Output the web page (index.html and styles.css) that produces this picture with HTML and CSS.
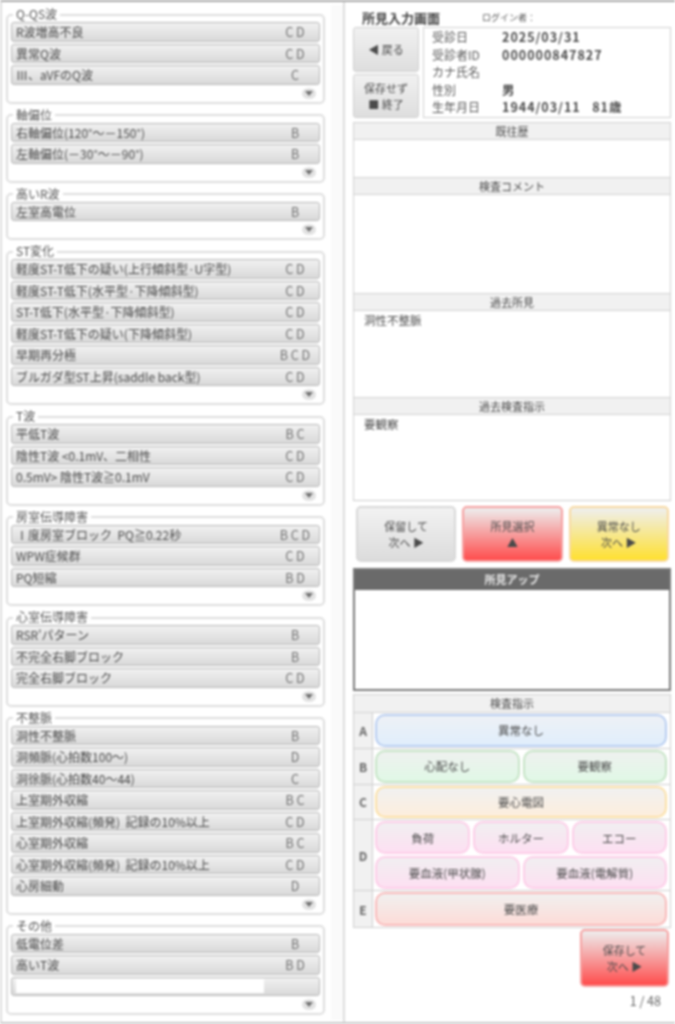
FILE: index.html
```html
<!DOCTYPE html>
<html lang="ja">

<head>
    <meta charset="UTF-8">
    <meta name="viewport" content="width=device-width, initial-scale=1.0">
    <title>所見入力画面</title>
    <link rel="stylesheet" href="styles.css">
</head>

<body>
    <div class="screen">
        <div class="left">
            <div class="groups">
                <fieldset class="group">
                    <legend>Q-QS波</legend>
                    <div class="row"><span>R波増高不良</span><span class="code">C D</span></div>
                    <div class="row"><span>異常Q波</span><span class="code">C D</span></div>
                    <div class="row"><span>Ⅲ、aVFのQ波</span><span class="code">C</span></div>
                    <div class="more"><span class="arrow"></span></div>
                </fieldset>
                <fieldset class="group">
                    <legend>軸偏位</legend>
                    <div class="row"><span>右軸偏位(120°～－150°)</span><span class="code">B</span></div>
                    <div class="row"><span>左軸偏位(－30°～－90°)</span><span class="code">B</span></div>
                    <div class="more"><span class="arrow"></span></div>
                </fieldset>
                <fieldset class="group">
                    <legend>高いR波</legend>
                    <div class="row"><span>左室高電位</span><span class="code">B</span></div>
                    <div class="more"><span class="arrow"></span></div>
                </fieldset>
                <fieldset class="group">
                    <legend>ST変化</legend>
                    <div class="row"><span>軽度ST-T低下の疑い(上行傾斜型·U字型)</span><span class="code">C D</span></div>
                    <div class="row"><span>軽度ST-T低下(水平型·下降傾斜型)</span><span class="code">C D</span></div>
                    <div class="row"><span>ST-T低下(水平型·下降傾斜型)</span><span class="code">C D</span></div>
                    <div class="row"><span>軽度ST-T低下の疑い(下降傾斜型)</span><span class="code">C D</span></div>
                    <div class="row"><span>早期再分極</span><span class="code">B C D</span></div>
                    <div class="row"><span>ブルガダ型ST上昇(saddle back型)</span><span class="code">C D</span></div>
                    <div class="more"><span class="arrow"></span></div>
                </fieldset>
                <fieldset class="group">
                    <legend>T波</legend>
                    <div class="row"><span>平低T波</span><span class="code">B C</span></div>
                    <div class="row"><span>陰性T波 &lt;0.1mV、二相性</span><span class="code">C D</span></div>
                    <div class="row"><span>0.5mV&gt; 陰性T波≧0.1mV</span><span class="code">C D</span></div>
                    <div class="more"><span class="arrow"></span></div>
                </fieldset>
                <fieldset class="group">
                    <legend>房室伝導障害</legend>
                    <div class="row"><span>Ⅰ度房室ブロック&nbsp; PQ≧0.22秒</span><span class="code">B C D</span></div>
                    <div class="row"><span>WPW症候群</span><span class="code">C D</span></div>
                    <div class="row"><span>PQ短縮</span><span class="code">B D</span></div>
                    <div class="more"><span class="arrow"></span></div>
                </fieldset>
                <fieldset class="group">
                    <legend>心室伝導障害</legend>
                    <div class="row"><span>RSR'パターン</span><span class="code">B</span></div>
                    <div class="row"><span>不完全右脚ブロック</span><span class="code">B</span></div>
                    <div class="row"><span>完全右脚ブロック</span><span class="code">C D</span></div>
                    <div class="more"><span class="arrow"></span></div>
                </fieldset>
                <fieldset class="group">
                    <legend>不整脈</legend>
                    <div class="row"><span>洞性不整脈</span><span class="code">B</span></div>
                    <div class="row"><span>洞頻脈(心拍数100～)</span><span class="code">D</span></div>
                    <div class="row"><span>洞徐脈(心拍数40～44)</span><span class="code">C</span></div>
                    <div class="row"><span>上室期外収縮</span><span class="code">B C</span></div>
                    <div class="row"><span>上室期外収縮(頻発)&nbsp; 記録の10%以上</span><span class="code">C D</span></div>
                    <div class="row"><span>心室期外収縮</span><span class="code">B C</span></div>
                    <div class="row"><span>心室期外収縮(頻発)&nbsp; 記録の10%以上</span><span class="code">C D</span></div>
                    <div class="row"><span>心房細動</span><span class="code">D</span></div>
                    <div class="more"><span class="arrow"></span></div>
                </fieldset>
                <fieldset class="group">
                    <legend>その他</legend>
                    <div class="row"><span>低電位差</span><span class="code">B</span></div>
                    <div class="row"><span>高いT波</span><span class="code">B D</span></div>
                    <div class="row row-input"><input class="free" type="text"></div>
                    <div class="more"><span class="arrow"></span></div>
                </fieldset>
            </div>
            <div class="scrollbar"></div>
        </div>

        <div class="right">
            <div class="head">
                <span class="title">所見入力画面</span>
                <span class="login">ログイン者：</span>
            </div>
            <div class="top">
                <div class="nav">
                    <button class="nav-btn">◀ 戻る</button>
                    <button class="nav-btn">保存せず<br>■ 終了</button>
                </div>
                <div class="info">
                    <div class="info-row"><span class="info-label">受診日</span><span class="info-value">2025/03/31</span></div>
                    <div class="info-row"><span class="info-label">受診者ID</span><span class="info-value">000000847827</span></div>
                    <div class="info-row"><span class="info-label">カナ氏名</span><span class="info-value"></span></div>
                    <div class="info-row"><span class="info-label">性別</span><span class="info-value">男</span></div>
                    <div class="info-row"><span class="info-label">生年月日</span><span class="info-value">1944/03/11&nbsp;&nbsp; 81歳</span></div>
                </div>
            </div>

            <div class="sections">
                <div class="sec-head">既往歴</div>
                <div class="sec-body h-history"></div>
                <div class="sec-head">検査コメント</div>
                <div class="sec-body h-comment"></div>
                <div class="sec-head">過去所見</div>
                <div class="sec-body h-past">洞性不整脈</div>
                <div class="sec-head">過去検査指示</div>
                <div class="sec-body h-order">要観察</div>
            </div>

            <div class="actions">
                <button class="action grey">保留して<br>次へ ▶</button>
                <button class="action red">所見選択<br>▲</button>
                <button class="action yellow">異常なし<br>次へ ▶</button>
            </div>

            <div class="findings">
                <div class="findings-head">所見アップ</div>
                <div class="findings-body"></div>
            </div>

            <div class="orders">
                <div class="sec-head orders-head">検査指示</div>
                <div class="order-row">
                    <div class="letter">A</div>
                    <div class="choices"><button class="choice blue">異常なし</button></div>
                </div>
                <div class="order-row">
                    <div class="letter">B</div>
                    <div class="choices"><button class="choice green">心配なし</button><button class="choice green">要観察</button></div>
                </div>
                <div class="order-row">
                    <div class="letter">C</div>
                    <div class="choices"><button class="choice orange">要心電図</button></div>
                </div>
                <div class="order-row order-row-d">
                    <div class="letter">D</div>
                    <div class="choices-stack">
                        <div class="choices"><button class="choice pink">負荷</button><button class="choice pink">ホルター</button><button class="choice pink">エコー</button></div>
                        <div class="choices"><button class="choice pink">要血液(甲状腺)</button><button class="choice pink">要血液(電解質)</button></div>
                    </div>
                </div>
                <div class="order-row">
                    <div class="letter">E</div>
                    <div class="choices"><button class="choice salmon">要医療</button></div>
                </div>
            </div>

            <div class="save-line">
                <button class="action red save">保存して<br>次へ ▶</button>
            </div>
            <div class="pager">1 / 48</div>
        </div>
    </div>
</body>

</html>
```

FILE: styles.css
```css
* {
    box-sizing: border-box;
}

html,
body {
    margin: 0;
    height: 100%;
    background-color: #fff;
}

body {
    overflow: hidden;
    font-family: "Noto Sans CJK JP", "Noto Sans", sans-serif;
    font-size: 12px;
    color: #4a4a4a;
}

button {
    font-family: inherit;
    color: #4a4a4a;
    padding: 0;
    cursor: pointer;
}

.screen {
    display: flex;
    width: 675px;
    height: 1024px;
    border-top: 2px solid #a8a8a8;
    border-bottom: 2px solid #c8c8c8;
    border-left: 2px solid #ddd;
    filter: blur(0.8px);
}

/* left column */
.left {
    display: flex;
    width: 343px;
    border-right: 2px solid #ddd;
}

.groups {
    width: 329px;
    padding: 5px 0 0 4px;
}

.group {
    width: 319px;
    margin: 0 0 4px;
    padding: 0 3px;
    border: 2px solid #dedede;
    border-radius: 5px;
}

.group legend {
    height: 15px;
    line-height: 14px;
    margin-left: 2px;
    padding: 0 3px;
    font-size: 12px;
    color: #555;
}

.row {
    display: flex;
    align-items: center;
    justify-content: space-between;
    height: 19.5px;
    margin-bottom: 2px;
    padding-left: 4px;
    border: 1px solid #b8b8b8;
    border-radius: 3px;
    background: linear-gradient(#f1f1f1, #d9d9d9);
    white-space: nowrap;
}

.code {
    width: 44px;
    margin-right: 2px;
    text-align: center;
    color: #707070;
    font-size: 12.5px;
}

.row-input {
    padding: 2px 0 2px 4px;
}

.free {
    width: 248px;
    height: 14px;
    padding: 0;
    border: 0;
    background-color: #fff;
}

.more {
    display: flex;
    justify-content: flex-end;
    height: 15px;
    padding: 1px 4px 0 0;
}

.arrow {
    display: flex;
    justify-content: center;
    align-items: center;
    width: 14px;
    height: 11px;
    border-radius: 50%;
    background-color: #e2e2e2;
}

.arrow::after {
    content: "";
    border-top: 5px solid #707070;
    border-left: 4px solid transparent;
    border-right: 4px solid transparent;
}

.scrollbar {
    width: 12px;
    margin: 3px 0 2px;
    background-color: #fafafa;
}

/* right column */
.right {
    width: 326px;
    padding-left: 8px;
}

.head {
    display: flex;
    align-items: center;
    gap: 42px;
    height: 25px;
    padding: 5px 0 0 9px;
}

.title {
    font-size: 13px;
    font-weight: 700;
    color: #444;
}

.login {
    font-size: 9px;
    color: #555;
}

.top {
    display: flex;
    gap: 4px;
    height: 91px;
}

.nav {
    display: flex;
    flex-direction: column;
    gap: 2px;
    width: 66px;
}

.nav-btn {
    flex: 1;
    font-size: 11px;
    line-height: 16px;
    border: 1px solid #cfcfcf;
    border-radius: 3px;
    background: linear-gradient(#f1f1f1, #dedede);
}

.info {
    flex: 1;
    padding: 0 0 0 8px;
    border: 1px solid #d0d0d0;
}

.info-row {
    display: flex;
    height: 17.6px;
    line-height: 17.6px;
}

.info-label {
    width: 70px;
    color: #5a5a5a;
}

.info-value {
    font-size: 12.5px;
    font-weight: 700;
    letter-spacing: 1px;
    color: #4a4a4a;
}

.sections {
    margin-top: 4px;
    border-bottom: 1px solid #ccc;
}

.sec-head {
    height: 18px;
    line-height: 17px;
    text-align: center;
    font-size: 11px;
    border: 1px solid #d2d2d2;
    background-color: #f1f1f1;
}

.sec-body {
    padding: 1px 0 0 10px;
    font-size: 11.5px;
    border-left: 1px solid #d2d2d2;
    border-right: 1px solid #d2d2d2;
    background-color: #fff;
}

.h-history {
    height: 37px;
}

.h-comment {
    height: 98px;
}

.h-past {
    height: 86px;
}

.h-order {
    height: 85px;
}

.actions {
    display: flex;
    gap: 6px;
    margin-top: 5px;
    padding: 0 2px 0 3px;
}

.action {
    flex: 1;
    height: 56px;
    font-size: 11px;
    line-height: 16px;
    border: 2px solid #d8d8d8;
    border-radius: 5px;
}

.grey {
    background: linear-gradient(#f2f2f2, #dcdcdc);
}

.red {
    border-color: #f6a0a0;
    background: linear-gradient(#eeeeee, #ff4d4d);
}

.yellow {
    border-color: #f8d9a0;
    background: linear-gradient(#efefef, #ffe030);
}

.findings {
    margin-top: 6px;
    height: 123px;
    border: 2px solid #7a7a7a;
}

.findings-head {
    height: 19px;
    line-height: 18px;
    text-align: center;
    font-size: 11px;
    font-weight: 700;
    color: #e8e8e8;
    background-color: #6a6a6a;
}

.findings-body {
    height: 100px;
    border-top: 1px solid #6a6a6a;
    background-color: #fff;
}

.orders {
    margin-top: 3px;
    border: 1px solid #cfcfcf;
    border-top: 0;
}

.orders-head {
    height: 19px;
    border-left: 0;
    border-right: 0;
}

.order-row {
    display: flex;
    height: 35.8px;
    border-bottom: 1px solid #cfcfcf;
}

.order-row:last-child {
    border-bottom: 0;
}

.order-row-d {
    height: 71px;
}

.letter {
    display: flex;
    align-items: center;
    justify-content: center;
    width: 19px;
    font-size: 12px;
    font-weight: 700;
    color: #666;
    background-color: #f1f1f1;
    border-right: 1px solid #cfcfcf;
}

.choices {
    flex: 1;
    display: flex;
    gap: 3px;
    padding: 1px 3px 1px 2px;
}

.choices-stack {
    flex: 1;
    display: flex;
    flex-direction: column;
}

.choice {
    flex: 1;
    min-width: 0;
    font-size: 11.5px;
    border: 2px solid #ccc;
    border-radius: 10px;
}

.blue {
    border-color: #b8cdf0;
    background: linear-gradient(#eef1f6, #e0eefc);
}

.green {
    border-color: #c6e4c6;
    background: linear-gradient(#eff1ef, #e0f8e6);
}

.orange {
    border-color: #fbe0a6;
    background: linear-gradient(#f1f1f1, #fdeedd);
}

.pink {
    border-color: #fdcde8;
    background: linear-gradient(#f1eff1, #fde0f2);
}

.salmon {
    border-color: #f8baba;
    background: linear-gradient(#f1f0ef, #fddcd8);
}

.save-line {
    display: flex;
    justify-content: flex-end;
    margin-top: 1px;
    padding-right: 2px;
}

.save {
    flex: none;
    width: 89px;
    height: 58px;
}

.pager {
    margin-top: 4px;
    padding-right: 10px;
    text-align: right;
    color: #666;
    font-size: 12.5px;
}
```
